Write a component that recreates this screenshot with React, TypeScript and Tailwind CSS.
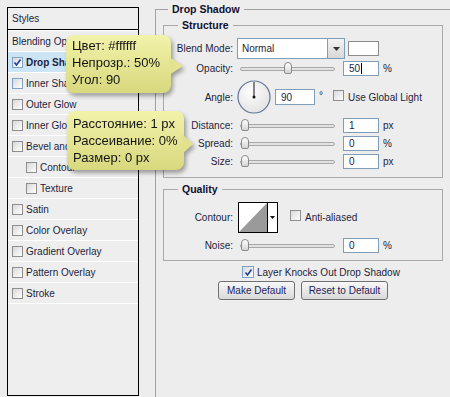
import React from "react";

function Box({ on, big, blue }: { on?: boolean; big?: boolean; blue?: boolean }) {
  return (
    <span
      className={
        (big ? "h-[12px] w-[12px] " : "h-[11px] w-[11px] ") +
        (blue ? "border-[#7fa3c8] " : "border-[#8e8e8e] ") +
        "inline-flex shrink-0 items-center justify-center border bg-gradient-to-br from-[#d9d9d9] to-white"
      }
    >
      {on && (
        <svg width="9" height="9" viewBox="0 0 9 9">
          <path d="M1.5 4.5 L3.5 7 L7.5 1.5" fill="none" stroke="#1f3f96" strokeWidth="1.6" />
        </svg>
      )}
    </span>
  );
}

function Slider({ pos }: { pos: number }) {
  return (
    <div className="relative ml-[7px] h-[13px] w-[95px] shrink-0">
      <div className="absolute left-0 right-0 top-[5px] h-[4px] rounded-full border border-[#a8a8a8] bg-[#e2e2e2]" />
      <div
        className="absolute top-0 h-[12px] w-[8px] rounded-t-[4px] rounded-b-[2px] border border-[#8a8a8a] bg-gradient-to-b from-white to-[#d4d4d4]"
        style={{ left: pos }}
      />
    </div>
  );
}

function Field({ value, caret }: { value: string; caret?: boolean }) {
  return (
    <div className="ml-[8px] flex h-[15px] w-[36px] shrink-0 items-center border border-[#7f9db9] bg-white pl-[5px] text-[#1c1c3c]">
      {value}
      {caret && <span className="ml-px h-[11px] w-px bg-black" />}
    </div>
  );
}

function SliderRow({ label, pos, value, unit, caret }: { label: string; pos: number; value: string; unit: string; caret?: boolean }) {
  return (
    <div className="flex h-[15px] items-center">
      <span className="w-[69px] text-right">{label}</span>
      <Slider pos={pos} />
      <Field value={value} caret={caret} />
      <span className="ml-[4px]">{unit}</span>
    </div>
  );
}

const styles: { name: string; on?: boolean; sel?: boolean; sub?: boolean; plain?: boolean }[] = [
  { name: "Blending Options: Default", plain: true },
  { name: "Drop Shadow", on: true, sel: true },
  { name: "Inner Shadow" },
  { name: "Outer Glow" },
  { name: "Inner Glow" },
  { name: "Bevel and Emboss" },
  { name: "Contour", sub: true },
  { name: "Texture", sub: true },
  { name: "Satin" },
  { name: "Color Overlay" },
  { name: "Gradient Overlay" },
  { name: "Pattern Overlay" },
  { name: "Stroke" },
];

export default function App() {
  return (
    <div className="relative flex h-[397px] w-[450px] items-start overflow-hidden bg-[#ededed] font-['Liberation_Sans',Arial,sans-serif] text-[10px] text-[#1e1e3c]">
      {/* styles list */}
      <div className="ml-[7px] mt-[7px] flex h-[389px] w-[132px] shrink-0 flex-col border border-black bg-[#eeeeee]">
        <div className="flex h-[22px] items-center border-b border-black pl-[4px]">Styles</div>
        <div className="h-px bg-white" />
        {styles.map((s) => (
          <div
            key={s.name}
            className={
              "flex h-[21px] items-center gap-[3px] whitespace-nowrap border-b border-white " +
              (s.sub ? "pl-[18px] " : "pl-[4px] ") +
              (s.sel ? "bg-[#cbe5f6] font-bold" : "")
            }
          >
            {!s.plain && <Box on={s.on} blue={s.sel || s.name === "Inner Shadow"} />}
            <span>{s.name}</span>
          </div>
        ))}
      </div>

      {/* drop shadow group */}
      <fieldset className="ml-[16px] mt-[3px] h-[420px] w-[300px] shrink-0 border border-[#a0a0a0] pl-[7px]">
        <legend className="ml-[5px] px-[4px] text-[10.5px] font-bold leading-[12px] text-[#101030]">Drop Shadow</legend>

        <fieldset className="mt-[4px] w-[280px] border border-[#a9a9a9] pb-[8px] pt-[7px]">
          <legend className="ml-[14px] px-[4px] text-[10.5px] font-bold leading-[12px] text-[#101030]">Structure</legend>

          <div className="flex h-[21px] items-center">
            <span className="w-[69px] text-right">Blend Mode:</span>
            <div className="ml-[4px] flex h-[21px] w-[108px] border border-[#7f9db9] bg-white">
              <span className="flex flex-1 items-center pl-[4px]">Normal</span>
              <span className="flex w-[17px] items-center justify-center border-l border-[#7f9db9] bg-gradient-to-b from-[#f4f4f4] to-[#d8d8d8]">
                <svg width="7" height="4" viewBox="0 0 7 4">
                  <path d="M0 0 H7 L3.5 4 Z" fill="#333" />
                </svg>
              </span>
            </div>
            <div className="ml-[3px] h-[15px] w-[31px] border border-[#8c8c8c] bg-white" />
          </div>

          <div className="mt-[2px]">
            <SliderRow label="Opacity:" pos={44} value="50" unit="%" caret />
          </div>

          <div className="mt-[4px] flex h-[34px] items-center">
            <span className="w-[69px] text-right">Angle:</span>
            <svg className="ml-[4px]" width="34" height="34" viewBox="0 0 34 34">
              <defs>
                <radialGradient id="dial" cx="0.4" cy="0.35" r="0.7">
                  <stop offset="0" stopColor="#fdfdfd" />
                  <stop offset="1" stopColor="#e2e2e2" />
                </radialGradient>
              </defs>
              <circle cx="17" cy="17" r="16" fill="url(#dial)" stroke="#63739a" strokeWidth="1.2" />
              <line x1="17" y1="17" x2="17" y2="2" stroke="#111" strokeWidth="1" />
              <circle cx="17" cy="17" r="1.5" fill="#111" />
            </svg>
            <div className="ml-[4px] flex h-[16px] w-[40px] items-center border border-[#7f9db9] bg-white pl-[5px]">90</div>
            <span className="ml-[4px] self-start pt-[8px]">°</span>
            <span className="ml-[10px]">
              <Box />
            </span>
            <span className="ml-[4px]">Use Global Light</span>
          </div>

          <div className="mt-[4px]">
            <SliderRow label="Distance:" pos={1} value="1" unit="px" />
          </div>
          <div className="mt-[3px]">
            <SliderRow label="Spread:" pos={1} value="0" unit="%" />
          </div>
          <div className="mt-[3px]">
            <SliderRow label="Size:" pos={1} value="0" unit="px" />
          </div>
        </fieldset>

        <fieldset className="mt-[5px] w-[280px] border border-[#a9a9a9] pb-[7px] pt-[7px]">
          <legend className="ml-[14px] px-[4px] text-[10.5px] font-bold leading-[12px] text-[#101030]">Quality</legend>

          <div className="flex h-[31px] items-center">
            <span className="w-[69px] text-right">Contour:</span>
            <div className="ml-[5px] flex h-[31px] w-[40px] border border-black bg-white">
              <svg width="28" height="29" viewBox="0 0 28 29">
                <polygon points="0,29 28,0 28,29" fill="#9a9a9a" />
              </svg>
              <span className="flex flex-1 items-center justify-center border-l border-black">
                <svg width="5" height="3" viewBox="0 0 5 3">
                  <path d="M0 0 H5 L2.5 3 Z" fill="#111" />
                </svg>
              </span>
            </div>
            <span className="ml-[12px]">
              <Box />
            </span>
            <span className="ml-[4px]">Anti-aliased</span>
          </div>

          <div className="mt-[5px]">
            <SliderRow label="Noise:" pos={1} value="0" unit="%" />
          </div>
        </fieldset>

        <div className="ml-[79px] mt-[5px] flex h-[12px] items-center gap-[3px]">
          <Box on big blue />
          <span>Layer Knocks Out Drop Shadow</span>
        </div>

        <div className="ml-[55px] mt-[3px] flex gap-[6px]">
          <button className="h-[19px] w-[77px] rounded-[3px] border border-[#707070] bg-gradient-to-b from-[#f8f8f8] to-[#d9d9d9] text-[#1e1e5a]">
            Make Default
          </button>
          <button className="h-[19px] w-[87px] rounded-[3px] border border-[#707070] bg-gradient-to-b from-[#f8f8f8] to-[#d9d9d9] text-[#1e1e5a]">
            Reset to Default
          </button>
        </div>
      </fieldset>

      {/* tooltips */}
      <div className="absolute left-[66px] top-[35px] drop-shadow-[2px_3px_2px_rgba(0,0,0,0.35)]">
        <div className="w-[105px] whitespace-nowrap rounded-[8px] bg-gradient-to-b from-[#f2f2aa] to-[#d8d87e] pb-[5px] pl-[6px] pt-[2px] text-[13px] leading-[17px] text-[#151515]">
          <div>Цвет: #ffffff</div>
          <div>Непрозр.: 50%</div>
          <div>Угол: 90</div>
        </div>
        <svg className="absolute left-[103px] top-[22px]" width="14" height="18" viewBox="0 0 14 18">
          <polygon points="0,0 14,9 0,18" fill="#e3e390" />
        </svg>
      </div>

      <div className="absolute left-[67px] top-[111px] drop-shadow-[2px_3px_2px_rgba(0,0,0,0.35)]">
        <div className="w-[117px] whitespace-nowrap rounded-[8px] bg-gradient-to-b from-[#f2f2aa] to-[#d8d87e] pb-[4px] pl-[6px] pt-[4px] text-[13px] leading-[17px] text-[#151515]">
          <div>Расстояние: 1 px</div>
          <div>Рассеивание: 0%</div>
          <div>Размер: 0 px</div>
        </div>
        <svg className="absolute left-[115px] top-[23px]" width="11" height="20" viewBox="0 0 11 20">
          <polygon points="0,0 11,10 0,20" fill="#e2e28e" />
        </svg>
      </div>
    </div>
  );
}
